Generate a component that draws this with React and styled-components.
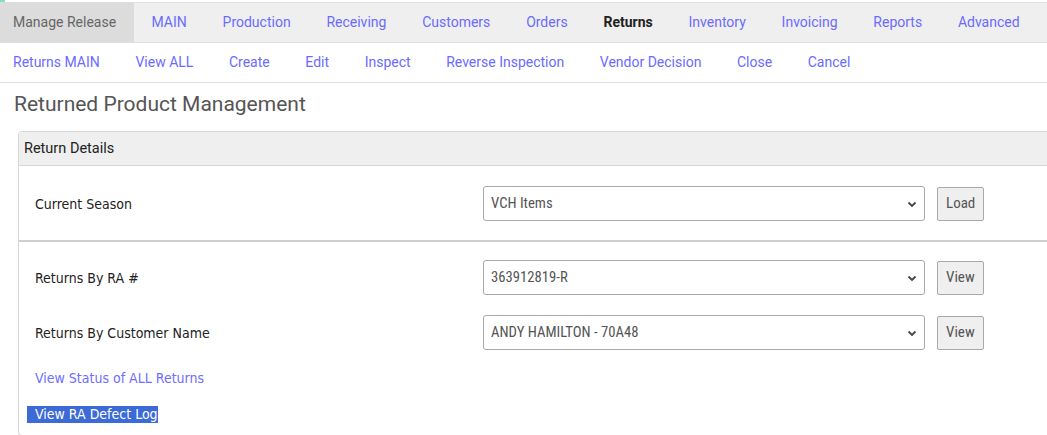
import React from "react";
import styled, { createGlobalStyle } from "styled-components";

const Global = createGlobalStyle`
  html, body {
    margin: 0;
    padding: 0;
    background: #fff;
    overflow: hidden;
  }
  body {
    font-family: Roboto, "Liberation Sans", sans-serif;
  }
`;

const Page = styled.div`
  position: relative;
  width: 1047px;
  height: 435px;
  overflow: hidden;
  padding-top: 2px;
  box-sizing: border-box;
`;

const Marker = styled.span`
  position: absolute;
  left: 0;
  top: 0;
  width: 5px;
  height: 2px;
  background: #7fe0c8;
`;

const TopNav = styled.nav`
  display: flex;
  height: 39px;
  background: #efefef;
  border-top: 1px solid #dedede;
  border-bottom: 1px solid #dedede;
`;

const TopItem = styled.a`
  display: flex;
  align-items: center;
  padding: 0 17.9px 2px;
  font-size: 14px;
  color: ${(p) => (p.$active ? "#222" : "#6b6bff")};
  font-weight: ${(p) => (p.$active ? 700 : 400)};
  text-decoration: none;
  white-space: nowrap;
  &:first-child {
    padding-left: 13px;
    padding-right: 17.5px;
    background: #dcdcdc;
    color: #666;
  }
`;

const SubNav = styled.nav`
  display: flex;
  height: 39px;
  border-bottom: 1px solid #dedede;
`;

const SubItem = styled.a`
  display: flex;
  align-items: center;
  padding: 0 17.8px 2px;
  font-size: 14px;
  color: #6b6bff;
  text-decoration: none;
  white-space: nowrap;
  &:first-child {
    padding-left: 13px;
  }
`;

const Title = styled.h1`
  margin: 9px 0 0 14px;
  font-size: 21px;
  font-weight: 400;
  color: #555;
  line-height: 24px;
`;

const Panel = styled.section`
  margin: 15px 0 0 18px;
  width: 1100px;
  border: 1px solid #d6d6d6;
  border-radius: 4px;
  overflow: hidden;
`;

const PanelHeader = styled.div`
  height: 33px;
  display: flex;
  align-items: center;
  padding-left: 5px;
  background: #efefef;
  border-bottom: 1px solid #d6d6d6;
  font-size: 14.5px;
  color: #222;
`;

const Section = styled.div`
  display: flex;
  flex-direction: column;
  gap: 20px;
  padding: ${(p) => p.$pad};
  border-bottom: ${(p) => (p.$divider ? "2px solid #cfcfcf" : "none")};
`;

const Row = styled.div`
  display: grid;
  grid-template-columns: 436px 442px auto;
  column-gap: 12px;
  align-items: center;
  padding-left: 16px;
`;

const Label = styled.span`
  font-family: "DejaVu Sans Condensed", "DejaVu Sans", sans-serif;
  font-size: 14px;
  color: #222;
`;

const SelectWrap = styled.div`
  position: relative;
  height: 35px;
  box-sizing: border-box;
  border: 1px solid #a9a9a9;
  border-radius: 3px;
  display: flex;
  align-items: center;
  padding: 0 0 1px 7px;
  font-family: "Roboto Condensed", "Liberation Sans Narrow", Roboto, sans-serif;
  font-size: 14.7px;
  color: #555;
  & > svg {
    position: absolute;
    right: 7px;
    top: 14px;
  }
`;

const Button = styled.button`
  height: 34px;
  padding: 0 8px 1px;
  box-sizing: border-box;
  border: 1px solid #a9a9a9;
  border-radius: 2px;
  background: #efefef;
  font-family: "Roboto Condensed", "Liberation Sans Narrow", Roboto, sans-serif;
  font-size: 15px;
  color: #555;
  justify-self: start;
`;

const Links = styled.div`
  display: flex;
  flex-direction: column;
  align-items: flex-start;
  gap: 19px;
  padding: 0 0 0 8px;
`;

const TextLink = styled.a`
  font-family: "DejaVu Sans Condensed", "DejaVu Sans", sans-serif;
  font-size: 14px;
  line-height: 17px;
  padding-left: 8px;
  color: ${(p) => (p.$selected ? "#fff" : "#6e6eff")};
  background: ${(p) => (p.$selected ? "#3c6ad6" : "transparent")};
  text-decoration: none;
`;

const Chevron = () => (
  <svg width="10" height="7" viewBox="0 0 10 7">
    <path d="M1.5 1.5 L5 5 L8.5 1.5" fill="none" stroke="#444" strokeWidth="1.8" />
  </svg>
);

const Picker = ({ value }) => (
  <SelectWrap>
    {value}
    <Chevron />
  </SelectWrap>
);

const top = [
  "Manage Release",
  "MAIN",
  "Production",
  "Receiving",
  "Customers",
  "Orders",
  "Returns",
  "Inventory",
  "Invoicing",
  "Reports",
  "Advanced",
];

const sub = [
  "Returns MAIN",
  "View ALL",
  "Create",
  "Edit",
  "Inspect",
  "Reverse Inspection",
  "Vendor Decision",
  "Close",
  "Cancel",
];

export default function App() {
  return (
    <Page>
      <Global />
      <Marker />
      <TopNav>
        {top.map((t) => (
          <TopItem key={t} href="#" $active={t === "Returns"}>
            {t}
          </TopItem>
        ))}
      </TopNav>
      <SubNav>
        {sub.map((t) => (
          <SubItem key={t} href="#">
            {t}
          </SubItem>
        ))}
      </SubNav>
      <Title>Returned Product Management</Title>
      <Panel>
        <PanelHeader>Return Details</PanelHeader>
        <Section $pad="20px 0 19px" $divider>
          <Row>
            <Label>Current Season</Label>
            <Picker value="VCH Items" />
            <Button>Load</Button>
          </Row>
        </Section>
        <Section $pad="18px 0 12px">
          <Row>
            <Label>Returns By RA #</Label>
            <Picker value="363912819-R" />
            <Button>View</Button>
          </Row>
          <Row>
            <Label>Returns By Customer Name</Label>
            <Picker value="ANDY HAMILTON - 70A48" />
            <Button>View</Button>
          </Row>
          <Links>
            <TextLink href="#">View Status of ALL Returns</TextLink>
            <TextLink href="#" $selected>
              View RA Defect Log
            </TextLink>
          </Links>
        </Section>
      </Panel>
    </Page>
  );
}
